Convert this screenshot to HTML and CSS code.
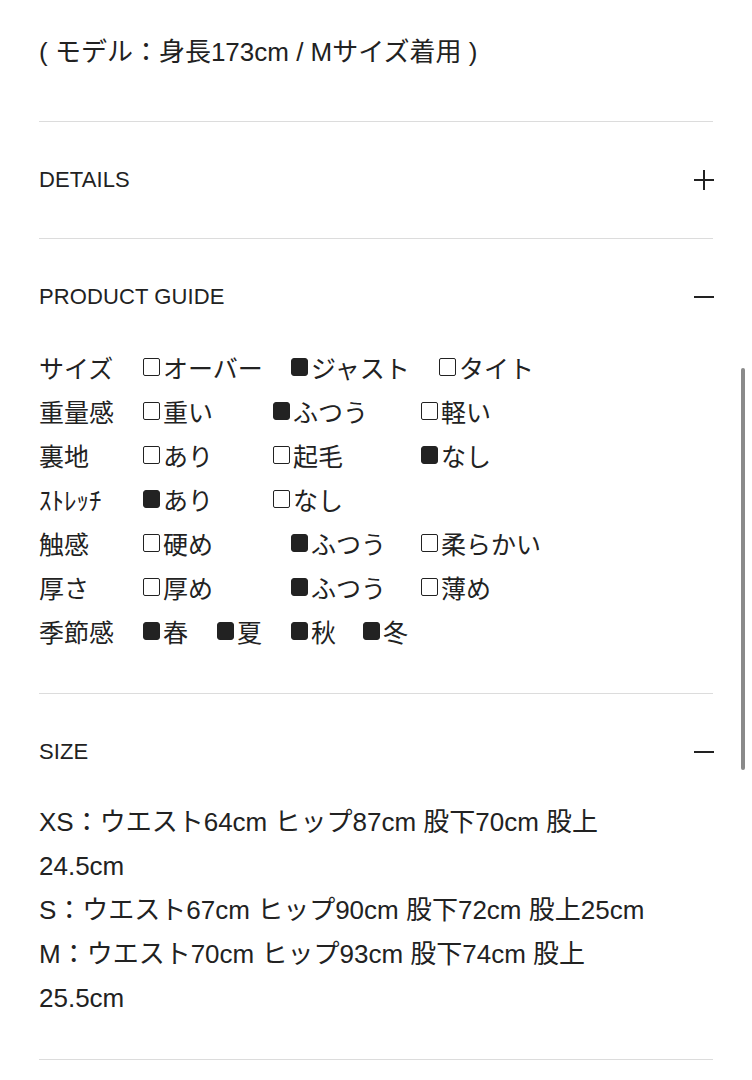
FILE: index.html
```html
<!DOCTYPE html>
<html lang="ja">
<head>
<meta charset="utf-8">
<link rel="stylesheet" href="styles.css">
</head>
<body>
<div class="page">
  <p class="model">( モデル：身長173cm / Mサイズ着用 )</p>

  <section class="acc">
    <div class="acc-head">
      <span class="acc-title">DETAILS</span>
      <span class="icon plus"></span>
    </div>
  </section>

  <section class="acc open">
    <div class="acc-head">
      <span class="acc-title">PRODUCT GUIDE</span>
      <span class="icon minus"></span>
    </div>
    <div class="guide">
      <div class="row"><span class="label">サイズ</span><span class="opt w148"><i class="box"></i>オーバー</span><span class="opt w148"><i class="box on"></i>ジャスト</span><span class="opt"><i class="box"></i>タイト</span></div>
      <div class="row"><span class="label">重量感</span><span class="opt w130"><i class="box"></i>重い</span><span class="opt w148"><i class="box on"></i>ふつう</span><span class="opt"><i class="box"></i>軽い</span></div>
      <div class="row"><span class="label">裏地</span><span class="opt w130"><i class="box"></i>あり</span><span class="opt w148"><i class="box"></i>起毛</span><span class="opt"><i class="box on"></i>なし</span></div>
      <div class="row"><span class="label">ｽﾄﾚｯﾁ</span><span class="opt w130"><i class="box on"></i>あり</span><span class="opt"><i class="box"></i>なし</span></div>
      <div class="row"><span class="label">触感</span><span class="opt w148"><i class="box"></i>硬め</span><span class="opt w130"><i class="box on"></i>ふつう</span><span class="opt"><i class="box"></i>柔らかい</span></div>
      <div class="row"><span class="label">厚さ</span><span class="opt w148"><i class="box"></i>厚め</span><span class="opt w130"><i class="box on"></i>ふつう</span><span class="opt"><i class="box"></i>薄め</span></div>
      <div class="row"><span class="label">季節感</span><span class="opt w74"><i class="box on"></i>春</span><span class="opt w74"><i class="box on"></i>夏</span><span class="opt w72"><i class="box on"></i>秋</span><span class="opt"><i class="box on"></i>冬</span></div>
    </div>
  </section>

  <section class="acc open">
    <div class="acc-head">
      <span class="acc-title">SIZE</span>
      <span class="icon minus"></span>
    </div>
    <div class="size">
      <p>XS：ウエスト64cm ヒップ87cm 股下70cm 股上24.5cm</p>
      <p>S：ウエスト67cm ヒップ90cm 股下72cm 股上25cm</p>
      <p>M：ウエスト70cm ヒップ93cm 股下74cm 股上25.5cm</p>
    </div>
  </section>
  <div class="end"></div>
</div>
<div class="scroll-thumb"></div>
</body>
</html>
```

FILE: styles.css
```css
html, body {
  margin: 0;
  padding: 0;
  background: #fff;
}
body {
  font-family: "Liberation Sans", "Noto Sans CJK JP", sans-serif;
  color: #222;
  overflow: hidden;
}
.page {
  padding: 30px 39px 0 39px;
}
.model {
  margin: 0 0 47px 0;
  font-size: 26px;
  line-height: 44px;
}
.acc {
  border-top: 1px solid #dcdcdc;
}
.acc-head {
  display: flex;
  align-items: center;
  justify-content: space-between;
  height: 24px;
  padding: 46px 0;
}
.acc.open .acc-head {
  padding-bottom: 36px;
}
.acc-title {
  font-size: 22px;
  line-height: 24px;
  letter-spacing: 0.1px;
}
.icon {
  position: relative;
  width: 20px;
  height: 20px;
  margin-right: -1px;
}
.icon::before,
.icon::after {
  content: "";
  position: absolute;
  background: #222;
}
.icon::before {
  left: 0;
  top: 9px;
  width: 20px;
  height: 1.6px;
}
.plus::after {
  left: 9.2px;
  top: 0;
  width: 1.6px;
  height: 20px;
}
.minus::after {
  display: none;
}
.guide {
  padding-bottom: 40px;
  font-family: "Noto Sans CJK JP", sans-serif;
  font-size: 25px;
  line-height: 44px;
}
.row {
  display: flex;
  align-items: center;
  height: 44px;
  white-space: nowrap;
}
.label {
  width: 103px;
  flex: none;
}
.opt {
  display: inline-flex;
  align-items: center;
  flex: none;
}
.w148 { width: 148px; }
.w130 { width: 130px; }
.w74 { width: 74px; }
.w72 { width: 72px; }
.box {
  display: inline-block;
  box-sizing: border-box;
  width: 17px;
  height: 18px;
  margin: 0 3px 0 1px;
  border: 1.8px solid #222;
  border-radius: 2px;
}
.box.on {
  background: #222;
  border-radius: 3px;
}
.size {
  padding: 0 50px 39px 0;
  font-size: 26px;
  line-height: 44px;
}
.size p {
  margin: 0;
}
.end {
  border-top: 1px solid #dcdcdc;
  height: 20px;
}
.scroll-thumb {
  position: absolute;
  left: 741px;
  top: 368px;
  width: 4px;
  height: 402px;
  border-radius: 2px;
  background: #8a8a8a;
}
```
